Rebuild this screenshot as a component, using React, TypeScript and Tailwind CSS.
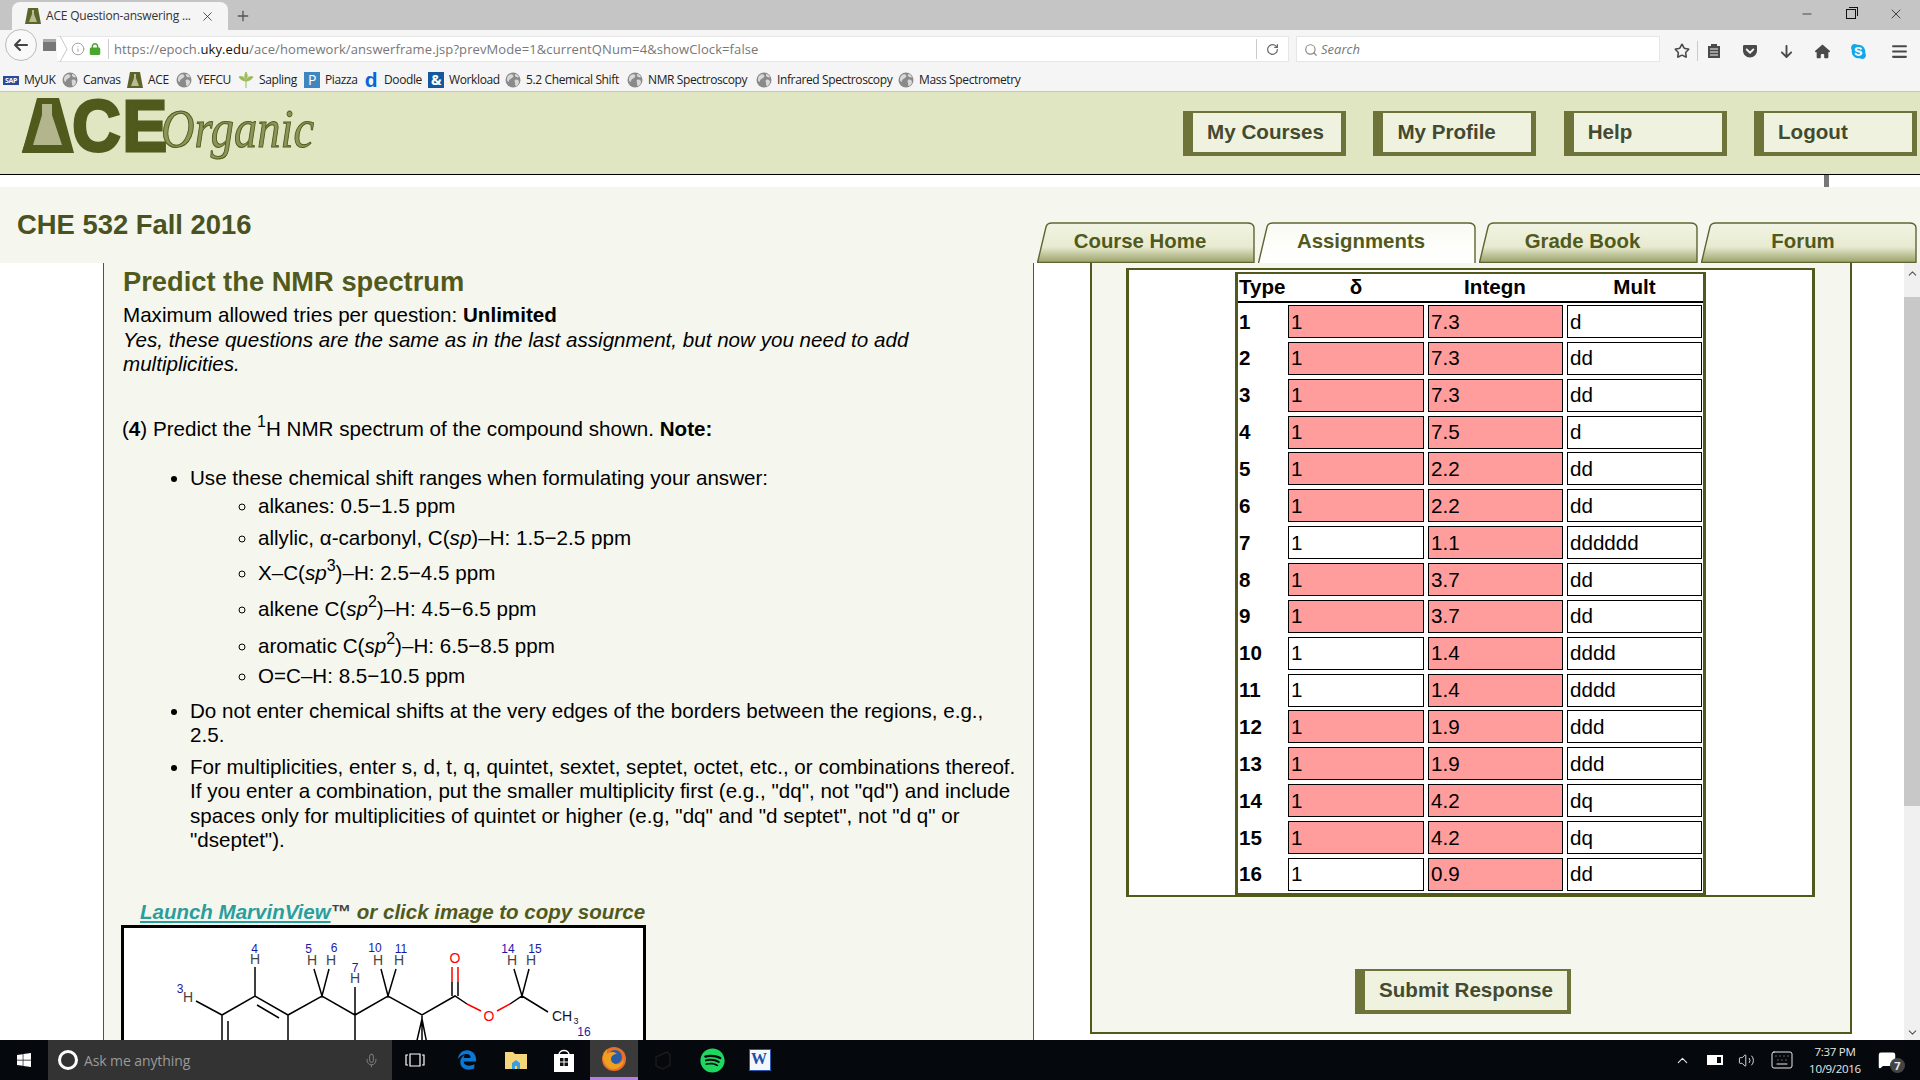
import React from "react";
import { FaSkype, FaGetPocket, FaLock, FaArrowLeft, FaArrowDown, FaHouse, FaBars, FaWindows, FaSpotify, FaEdgeLegacy } from "react-icons/fa6";
import { Search, RotateCw, Info, Star, X, Plus, Minus, Mic, ChevronUp, ChevronDown, Volume2, Keyboard, MessageSquare } from "lucide-react";

const Globe = () => (
  <svg width="16" height="16" viewBox="0 0 16 16" className="shrink-0">
    <circle cx="8" cy="8" r="7.5" fill="#8a8a8a" />
    <path d="M3 4c2-2 4-2 5-1s0 2-1 3-3 1-3 3-2 0-2-1 0-3 1-4zM10 8c2-1 4 0 4 2s-2 4-3 4-1-2-1-3-1-2 0-3zM10 2c2 0 3 1 4 3-1 1-3 0-4-1z" fill="#d8d8d8" />
  </svg>
);

const Flask = ({ s = 16 }: { s?: number }) => (
  <svg width={s} height={s} viewBox="0 0 16 16" className="shrink-0">
    <path d="M3 0h10l3 16H0z" fill="#5c6427" />
    <path d="M7 2h2v4l3 8H4l3-8z" fill="#b9bb94" />
  </svg>
);

const marks: { w: number; icon: React.ReactNode; t: string }[] = [
  { w: 59, icon: <span className="w-[16px] h-[9px] bg-[#2a4b9b] text-[7px] text-white font-bold leading-[9px] text-center shrink-0">SAP</span>, t: "MyUK" },
  { w: 65, icon: <Globe />, t: "Canvas" },
  { w: 49, icon: <Flask />, t: "ACE" },
  { w: 62, icon: <Globe />, t: "YEFCU" },
  { w: 66, icon: <svg width="16" height="16" viewBox="0 0 16 16" className="shrink-0"><path d="M8 16V8M8 9C5 9 2 7 1 5c3-1 6 0 7 4zM8 9c3 0 6-2 7-4-3-1-6 0-7 4zM8 7C6 5 7 2 8 0c1 2 2 5 0 7z" fill="#9bbb59" stroke="#9bbb59" /></svg>, t: "Sapling" },
  { w: 59, icon: <span className="w-[16px] h-[16px] bg-[#3f86bf] text-[14px] text-white leading-[15px] text-center shrink-0">P</span>, t: "Piazza" },
  { w: 65, icon: <span className="w-[16px] h-[16px] text-[21px] text-[#0a66d8] font-bold leading-[15px] text-center shrink-0 font-['Liberation_Sans',sans-serif]">d</span>, t: "Doodle" },
  { w: 77, icon: <span className="w-[16px] h-[16px] bg-[#15589e] text-[14px] text-white font-bold leading-[16px] text-center shrink-0">&amp;</span>, t: "Workload" },
  { w: 122, icon: <Globe />, t: "5.2 Chemical Shift" },
  { w: 129, icon: <Globe />, t: "NMR Spectroscopy" },
  { w: 142, icon: <Globe />, t: "Infrared Spectroscopy" },
  { w: 140, icon: <Globe />, t: "Mass Spectrometry" },
];

const NavButton = ({ t }: { t: string }) => (
  <div className="w-[163px] h-[45px] bg-[#eff2df] border-[#6e7339] border-t-2 border-b-4 border-r-[5px] border-l-[10px] pl-[14px] flex items-center text-[20.6px] font-bold text-[#444a30] whitespace-nowrap">{t}</div>
);

const Tab = ({ t, w, active }: { t: string; w: number; active?: boolean }) => {
  const id = active ? "tabA" : "tabB";
  return (
    <div className="relative h-[41px] flex items-center justify-center text-[20.4px] font-bold text-[#515a1c] pb-[3px]" style={{ width: w }}>
      <svg className="absolute inset-0 w-full h-full" viewBox="0 0 218 41" preserveAspectRatio="none">
        <defs>
          <linearGradient id={id} x1="0" x2="0" y1="0" y2="1">
            {active ? (
              <><stop offset="0" stopColor="#fbfbf4" /><stop offset="1" stopColor="#ffffff" /></>
            ) : (
              <><stop offset="0" stopColor="#f2f4e4" /><stop offset="0.6" stopColor="#e8ebd0" /><stop offset="1" stopColor="#9aa268" /></>
            )}
          </linearGradient>
        </defs>
        <path d={active ? "M0.5 41 L9 5 Q10 1 15 1 H210 Q217 1 217 6 V41" : "M0.5 40.5 L9 5 Q10 1 15 1 H210 Q217 1 217 6 V40.5 Z"} fill={`url(#${id})`} stroke="#5f6530" strokeWidth="1.4" />
      </svg>
      <span className="relative pr-[12px]">{t}</span>
    </div>
  );
};

const Sup = ({ t }: { t: string }) => <sup className="text-[16px] -top-[9px]">{t}</sup>;

const sub: { c: React.ReactNode; mb: string }[] = [
  { c: <>alkanes: 0.5−1.5 ppm</>, mb: "mb-[8px]" },
  { c: <>allylic, α-carbonyl, C(<i>sp</i>)–H: 1.5−2.5 ppm</>, mb: "mb-[10px]" },
  { c: <>X–C(<i>sp</i><Sup t="3" />)–H: 2.5−4.5 ppm</>, mb: "mb-[12px]" },
  { c: <>alkene C(<i>sp</i><Sup t="2" />)–H: 4.5−6.5 ppm</>, mb: "mb-[12px]" },
  { c: <>aromatic C(<i>sp</i><Sup t="2" />)–H: 6.5−8.5 ppm</>, mb: "mb-[6px]" },
  { c: <>O=C–H: 8.5−10.5 ppm</>, mb: "mb-[10px]" },
];

const rows: [string, boolean, string, string][] = [
  ["1", true, "7.3", "d"], ["2", true, "7.3", "dd"], ["3", true, "7.3", "dd"], ["4", true, "7.5", "d"],
  ["5", true, "2.2", "dd"], ["6", true, "2.2", "dd"], ["7", false, "1.1", "dddddd"], ["8", true, "3.7", "dd"],
  ["9", true, "3.7", "dd"], ["10", false, "1.4", "dddd"], ["11", false, "1.4", "dddd"], ["12", true, "1.9", "ddd"],
  ["13", true, "1.9", "ddd"], ["14", true, "4.2", "dq"], ["15", true, "4.2", "dq"], ["16", false, "0.9", "dd"],
];

const Cell = ({ v, bad }: { v: string; bad?: boolean }) => (
  <div className={`h-[33px] border border-black pl-[2px] pt-[1px] flex items-center text-[20.6px] ${bad ? "bg-[#ff9d9d]" : "bg-white"}`}>{v}</div>
);

const Line = ({ d, c = "#000" }: { d: string; c?: string }) => <path d={d} stroke={c} strokeWidth="1.5" fill="none" />;
const Lbl = ({ x, y, t, c = "#444", s = 14 }: { x: number; y: number; t: string; c?: string; s?: number }) => (
  <text x={x} y={y} fill={c} fontSize={s} textAnchor="middle" dominantBaseline="central" fontFamily="Liberation Sans">{t}</text>
);

const Molecule = () => (
  <svg width="519" height="200" viewBox="124 929 519 200" className="block">
    <Line d="M222 1016V1112M228 1022V1112M222 1016L255 997L288 1016V1112M257 1006L279 1019M288 1016L322 997L355 1016V1112M355 988V1016M355 1016L388 997L422 1016L455 997L467 1005M422 1016V1112M422 1020L415 1050M422 1020L428 1050M510 1005L522 997L548 1013M255 968V997M196 1002L222 1016M314 970L322 997L329 970M381 970L388 997L396 970M514 970L522 997L529 970M452 983V997M458 983V997" />
    <Line c="#ff0000" d="M452 968V983M458 968V983M467 1005L481 1012M497 1012L510 1005" />
    <Lbl x={255} y={960} t="H" /><Lbl x={188} y={998} t="H" /><Lbl x={312} y={961} t="H" /><Lbl x={331} y={961} t="H" /><Lbl x={355} y={979} t="H" />
    <Lbl x={378} y={961} t="H" /><Lbl x={399} y={961} t="H" /><Lbl x={512} y={961} t="H" /><Lbl x={531} y={961} t="H" />
    <Lbl x={455} y={959} t="O" c="#ff0000" /><Lbl x={489} y={1017} t="O" c="#ff0000" />
    <Lbl x={562} y={1017} t="CH" c="#111" /><Lbl x={576} y={1022} t="3" c="#111" s={9} />
    <Lbl x={254.5} y={950} t="4" c="#1a1aa8" s={12} /><Lbl x={180} y={990} t="3" c="#1a1aa8" s={12} /><Lbl x={308.5} y={950} t="5" c="#1a1aa8" s={12} />
    <Lbl x={334} y={949} t="6" c="#1a1aa8" s={12} /><Lbl x={355} y={969} t="7" c="#1a1aa8" s={12} /><Lbl x={375} y={949} t="10" c="#1a1aa8" s={12} />
    <Lbl x={401} y={950} t="11" c="#1a1aa8" s={12} /><Lbl x={508} y={950} t="14" c="#1a1aa8" s={12} /><Lbl x={535} y={950} t="15" c="#1a1aa8" s={12} />
    <Lbl x={584} y={1033} t="16" c="#1a1aa8" s={12} />
  </svg>
);

const Logo = () => (
  <svg width="300" height="76" viewBox="0 0 300 76" className="block overflow-visible">
    <text transform="scale(0.93 1)" x="0 54 108" y="54" fontSize="72" fontWeight="bold" fontFamily="Liberation Sans" fill="#4f5a1c" stroke="#4f5a1c" strokeWidth="3">ACE</text>
    <path d="M0 56L15 1H37L52 56z" fill="#4f5a1c" />
    <path d="M20 7H30V18L40 48H11L20 18z" fill="#b3b58d" />
    <text x="139" y="50" fontSize="54" fontStyle="italic" fontFamily="Liberation Serif" fill="#8d9458" stroke="#4f5a1c" strokeWidth="1" textLength="153" lengthAdjust="spacingAndGlyphs">Organic</text>
  </svg>
);

const Firefox = () => (
  <svg width="26" height="26" viewBox="0 0 26 26">
    <circle cx="13" cy="13" r="12" fill="#e8702a" />
    <circle cx="14" cy="11" r="7" fill="#2a5da8" />
    <path d="M2 12c1 7 6 12 12 11 5-1 9-5 9-10-2 4-5 6-9 5-3-1-4-3-4-5 0-3 3-5 6-5-3-3-8-2-10 0-1-2 0-4 0-5-2 2-4 5-4 9z" fill="#f0a020" />
  </svg>
);

export default function App() {
  return (
    <div className="w-[1920px] h-[1080px] overflow-hidden flex flex-col bg-white font-['Liberation_Sans',Arial,sans-serif] text-black">
      {/* tab strip */}
      <div className="h-[30px] shrink-0 bg-[#c5c5c5] flex font-['Open_Sans',sans-serif] text-[#333]">
        <div className="ml-[12px] mt-[2px] w-[216px] h-[28px] bg-[#f5f5f5] rounded-t-[8px] flex items-center pl-[13px] relative">
          <Flask />
          <span className="ml-[5px] text-[12px] tracking-[-0.2px] whitespace-nowrap">ACE Question-answering ...</span>
          <X size={15} strokeWidth={1.3} className="absolute right-[13px] top-[7px]" />
        </div>
        <Plus size={16} strokeWidth={2} className="ml-[7px] mt-[8px] text-[#555]" />
        <div className="ml-auto flex items-center h-[28px] pr-[16px] gap-[32px] text-[#111]">
          <Minus size={14} strokeWidth={1.2} />
          <div className="relative w-[10px] h-[10px] border border-[#111] before:content-[''] before:absolute before:w-[9px] before:h-[9px] before:border-t before:border-r before:border-[#111] before:-top-[3px] before:-right-[3px]" />
          <X size={16} strokeWidth={1.1} />
        </div>
      </div>
      {/* nav */}
      <div className="h-[32px] shrink-0 bg-[#f5f5f5] flex items-center relative font-['Open_Sans',sans-serif] pl-[5px]">
        <div className="w-[32px] h-[32px] rounded-full bg-[#f9f9f9] border border-[#bbb] flex items-center justify-center text-[#444] -mt-[3px] relative z-10"><FaArrowLeft size={16} /></div>
        <div className="w-[13px] h-[12px] ml-[6px] bg-[#777] -mt-[2px] border-t-[3px] border-[#aaa]" />
        <div className="ml-[1px] flex-1 h-[26px] mt-[6px] flex items-center">
          <div className="w-[1232px] h-[26px] bg-white border border-[#e6e6e6] border-l-0 flex items-center">
            <svg width="8" height="26" viewBox="0 0 8 26" className="ml-[3px] shrink-0"><path d="M0 0L7 13L0 26" fill="none" stroke="#c8c8c8" /></svg>
            <Info size={14} strokeWidth={1.3} className="text-[#888] ml-[3px]" />
            <FaLock size={12} className="ml-[4px] text-[#4aa52e]" />
            <div className="w-px h-[20px] bg-[#ccc] ml-[7px]" />
            <div className="ml-[5px] pt-[2px] text-[13px] text-[#777] whitespace-nowrap tracking-[0.1px]">https://epoch.<span className="text-[#111]">uky.edu</span>/ace/homework/answerframe.jsp?prevMode=1&amp;currentQNum=4&amp;showClock=false</div>
            <div className="ml-auto w-px h-[20px] bg-[#ccc]" />
            <RotateCw size={13} strokeWidth={2.2} className="text-[#666] mx-[9px]" />
          </div>
          <div className="ml-[7px] w-[364px] h-[26px] bg-white border border-[#e6e6e6] flex items-center pl-[7px] pt-[1px] text-[13px] italic text-[#777] gap-[3px]">
            <Search size={14} strokeWidth={2} className="text-[#888]" />Search
          </div>
        </div>
        <div className="absolute left-[1674px] top-[11px] flex items-center text-[#4a4a4a]">
          <Star size={16} strokeWidth={2.4} />
          <div className="w-px h-[20px] bg-[#ccc] ml-[7px]" />
          <svg width="14" height="16" viewBox="0 0 14 16" className="ml-[9px]"><path d="M1 3h12v12H1zM4 1h6v3H4z" fill="#4a4a4a" /><path d="M3 6h8M3 9h8M3 12h8" stroke="#f5f5f5" /></svg>
          <FaGetPocket size={16} className="ml-[21px]" />
          <FaArrowDown size={15} className="ml-[21px]" />
          <FaHouse size={15} className="ml-[21px]" />
          <FaSkype size={17} className="ml-[20px] text-[#12a8e8]" />
          <FaBars size={17} className="ml-[24px]" />
        </div>
      </div>
      {/* bookmarks */}
      <div className="h-[30px] shrink-0 bg-[#f5f5f5] border-b border-[#c4c4c4] flex items-center pl-[3px] pt-[7px] font-['Open_Sans',sans-serif] text-[12px] tracking-[-0.38px] text-[#222] whitespace-nowrap">
        {marks.map((m, i) => (
          <div key={i} className="flex items-center gap-[5px] shrink-0" style={{ width: m.w }}>{m.icon}<span>{m.t}</span></div>
        ))}
      </div>
      {/* header */}
      <div className="h-[83px] shrink-0 bg-[#e0e5c2] border-b border-black flex items-start pl-[22px] pt-[5px] relative">
        <Logo />
        <div className="ml-auto flex gap-[27.3px] pr-[3px] mt-[14px]">
          <NavButton t="My Courses" />
          <NavButton t="My Profile" />
          <NavButton t="Help" />
          <NavButton t="Logout" />
        </div>
      </div>
      {/* strip */}
      <div className="h-[12px] shrink-0 bg-white flex pl-[1824px]"><div className="w-[5px] h-[12px] bg-[#777]" /></div>
      {/* title + tabs */}
      <div className="h-[76px] shrink-0 bg-[#f5f6ee] flex justify-between">
        <div className="pl-[17px] pt-[22px] text-[27.4px] leading-[32px] font-bold text-[#4a5320]">CHE 532 Fall 2016</div>
        <div className="flex items-end gap-[3px] pr-[3px] mt-[35px]">
          <Tab t="Course Home" w={218} />
          <Tab t="Assignments" w={218} active />
          <Tab t="Grade Book" w={219} />
          <Tab t="Forum" w={216} />
        </div>
      </div>
      {/* content */}
      <div className="flex-1 min-h-0 flex overflow-hidden">
        <div className="w-[103px] shrink-0 bg-white" />
        <div className="w-[931px] shrink-0 bg-[#f5f7ef] border-l border-r border-[#515a1c] pl-[19px] pt-[4px] overflow-hidden">
          <h1 className="text-[27.3px] leading-[30px] font-bold text-[#515a1c] mb-[6px]">Predict the NMR spectrum</h1>
          <div className="text-[20.6px] leading-[24.5px] w-[895px]">
            <div>Maximum allowed tries per question: <b>Unlimited</b></div>
            <div className="italic">Yes, these questions are the same as in the last assignment, but now you need to add multiplicities.</div>
            <div className="mt-[40px] -ml-[1px]">(<b>4</b>) Predict the <Sup t="1" />H NMR spectrum of the compound shown. <b>Note:</b></div>
            <ul className="list-disc pl-[67px] mt-[25px]">
              <li>
                Use these chemical shift ranges when formulating your answer:
                <ul className="list-[circle] pl-[68px] mt-[3px]">
                  {sub.map((s, i) => <li key={i} className={s.mb}>{s.c}</li>)}
                </ul>
              </li>
              <li className="mb-[7px]">Do not enter chemical shifts at the very edges of the borders between the regions, e.g., 2.5.</li>
              <li>For multiplicities, enter s, d, t, q, quintet, sextet, septet, octet, etc., or combinations thereof. If you enter a combination, put the smaller multiplicity first (e.g., "dq", not "qd") and include spaces only for multiplicities of quintet or higher (e.g, "dq" and "d septet", not "d q" or "dseptet").</li>
            </ul>
          </div>
          <div className="mt-[46px] ml-[17px] text-[20.5px] leading-[26px] font-bold italic text-[#515a1c] whitespace-nowrap">
            <span className="text-[#2a9d9d] underline">Launch MarvinView</span><span className="not-italic text-[#444]">™</span> or click image to copy source
          </div>
          <div className="-ml-[2px] w-[525px] border-[3px] border-black bg-white"><Molecule /></div>
        </div>
        <div className="w-[56px] shrink-0 bg-white" />
        <div className="w-[762px] shrink-0 h-[771px] bg-[#f5f6ee] border-2 border-t-0 border-[#515a1c] pl-[34px] pt-[5px] flex flex-col">
          <div className="w-[689px] h-[629px] shrink-0 bg-white border-x-[3px] border-y-2 border-[#515a1c] pl-[106px] pt-[2px]">
            <div className="w-[471px] h-[623px] border-x-[3px] border-y-2 border-[#515a1c]">
              <div className="h-[29px] flex items-center text-[20.6px] font-bold border-b-2 border-black">
                <div className="w-[50px] pl-[1px]">Type</div>
                <div className="w-[136px] text-center">δ</div>
                <div className="w-[142px] text-center">Integn</div>
                <div className="w-[137px] text-center">Mult</div>
              </div>
              <div className="grid grid-cols-[46px_136px_135px_135px] gap-x-[4px] gap-y-[3.87px] pt-[2px]">
                {rows.map((r) => (
                  <React.Fragment key={r[0]}>
                    <div className="h-[33px] pt-[1px] flex items-center text-[20.6px] font-bold pl-[1px]">{r[0]}</div>
                    <Cell v="1" bad={r[1]} />
                    <Cell v={r[2]} bad />
                    <Cell v={r[3]} />
                  </React.Fragment>
                ))}
              </div>
            </div>
          </div>
          <div className="ml-[229px] mt-[72px] w-[216px] h-[45px] shrink-0 bg-[#eff2df] border-[#6e7339] border-t-2 border-b-4 border-r-[4px] border-l-[10px] flex items-center justify-center text-[20.6px] font-bold text-[#444a30] whitespace-nowrap">Submit Response</div>
        </div>
        <div className="w-[52px] shrink-0 bg-white" />
        <div className="w-[16px] shrink-0 bg-[#f0f0f0] flex flex-col items-center text-[#555]">
          <ChevronUp size={13} strokeWidth={2} className="mt-[4px] mb-[17px]" />
          <div className="w-full h-[509px] bg-[#c8c8c8]" />
          <ChevronDown size={13} strokeWidth={2} className="mt-auto mb-[1px]" />
        </div>
      </div>
      {/* taskbar */}
      <div className="h-[40px] shrink-0 bg-[#05090d] flex items-center relative text-white font-['Open_Sans',sans-serif]">
        <div className="w-[48px] flex justify-center"><FaWindows size={16} /></div>
        <div className="w-[344px] h-[40px] bg-[#333333] flex items-center pl-[10px] text-[14px] text-[#9a9a9a]">
          <div className="w-[20px] h-[20px] rounded-full border-[3px] border-white" />
          <span className="ml-[6px] tracking-[-0.1px]">Ask me anything</span>
          <Mic size={15} strokeWidth={1.4} className="ml-auto mr-[13px] text-[#888]" />
        </div>
        <div className="w-[46px] flex justify-center"><svg width="20" height="14" viewBox="0 0 20 14"><path d="M5 1h10v12H5zM3 2H1v10h2M17 2h2v10h-2" fill="none" stroke="#fff" strokeWidth="1.2" /></svg></div>
        <div className="ml-[5px] w-[48px] flex justify-center"><FaEdgeLegacy size={20} className="text-[#0a78d7]" /></div>
        <div className="ml-[1px] w-[48px] flex justify-center"><svg width="22" height="20" viewBox="0 0 22 20"><path d="M0 2h8l2 2h12v15H0z" fill="#f3d77a" /><path d="M7 19v-6l4-3 4 3v6h-3v-3h-2v3z" fill="#3aa0dc" /></svg></div>
        <div className="w-[48px] flex justify-center"><svg width="22" height="24" viewBox="0 0 22 24"><path d="M6 7C6 1 16 1 16 7" stroke="#fff" fill="none" strokeWidth="1.5" /><path d="M1 6h20v18H1z" fill="#fff" /><path d="M7 10h3.5v3.5H7zM11.5 10H15v3.5h-3.5zM7 14.5h3.5V18H7zM11.5 14.5H15V18h-3.5z" fill="#111" /></svg></div>
        <div className="ml-[2px] w-[48px] h-[40px] bg-[#3a3a3a] border-b-[3px] border-[#b57ee6] flex items-center justify-center"><Firefox /></div>
        <div className="ml-[1px] w-[48px] flex justify-center">
          <svg width="24" height="24" viewBox="0 0 24 24"><path d="M5 9l11-5 3 3 0 10-7 4-7-3z" fill="none" stroke="#1a1a1a" strokeWidth="1.5" /></svg>
        </div>
        <div className="ml-[1px] w-[48px] flex justify-center"><FaSpotify size={25} className="text-[#1ed760]" /></div>
        <div className="w-[48px] flex justify-center"><div className="w-[22px] h-[22px] bg-[#f4f7fc] border border-[#2a5bb0] text-[#1d50a8] font-bold text-[16px] leading-[18px] pl-[1px] font-['Liberation_Serif',serif]">W</div></div>
        <div className="ml-auto flex items-center text-[#e8e8e8] h-full">
          <ChevronUp size={17} strokeWidth={1.5} />
          <div className="ml-[16px] w-[16px] h-[10px] border-2 border-white flex"><div className="w-[8px] bg-white" /></div>
          <Volume2 size={17} strokeWidth={1.3} className="ml-[15px]" />
          <Keyboard size={24} strokeWidth={1} className="ml-[15px]" />
          <div className="ml-[12px] w-[58px] text-center text-[11.5px] leading-[17px] tracking-[-0.3px] -mt-[1px]"><div>7:37 PM</div><div>10/9/2016</div></div>
          <div className="relative ml-[14px] mr-[24px]">
            <MessageSquare size={18} fill="#fff" className="text-white" />
            <div className="absolute -right-[9px] top-[7px] w-[15px] h-[15px] rounded-full bg-[#444] text-[11px] font-bold leading-[15px] text-center">7</div>
          </div>
        </div>
      </div>
    </div>
  );
}
